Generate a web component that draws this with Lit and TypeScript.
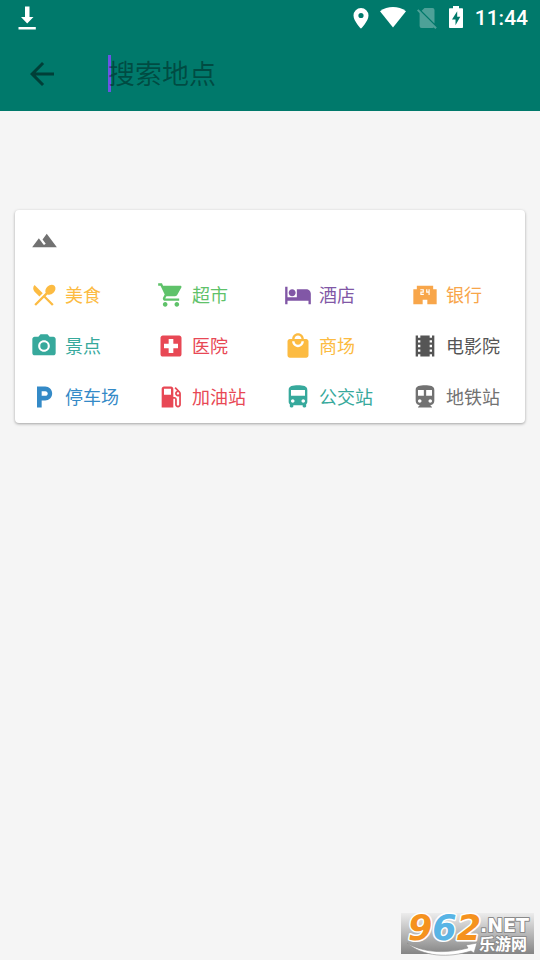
import { LitElement, html, css, svg } from "lit";
import { customElement, property } from "lit/decorators.js";

interface Place {
  label: string;
  tone: string;
  path: string;
}

const BACK = "M20 11H7.83l5.59-5.59L12 4l-8 8 8 8 1.41-1.41L7.83 13H20v-2z";
const TERRAIN = "M14 6l-3.75 5 2.85 3.8-1.6 1.2C9.81 13.75 7 10 7 10l-6 8h22L14 6z";

const PLACES: Place[] = [
  {
    label: "美食",
    tone: "amber",
    path: "M8.1 13.34l2.83-2.83L3.91 3.5c-1.56 1.56-1.56 4.09 0 5.66l4.19 4.18zm6.78-1.81c1.53.71 3.68.21 5.27-1.38 1.91-1.91 2.28-4.65.81-6.12-1.46-1.46-4.2-1.1-6.12.81-1.59 1.59-2.09 3.74-1.38 5.27L3.7 19.87l1.41 1.41L12 14.41l6.88 6.88 1.41-1.41L13.41 13l1.47-1.47z",
  },
  {
    label: "超市",
    tone: "green",
    path: "M7 18c-1.1 0-1.99.9-1.99 2S5.9 22 7 22s2-.9 2-2-.9-2-2-2zM1 2v2h2l3.6 7.59-1.35 2.45c-.16.28-.25.61-.25.96 0 1.1.9 2 2 2h12v-2H7.42c-.14 0-.25-.11-.25-.25l.03-.12.9-1.63h7.45c.75 0 1.41-.41 1.75-1.03l3.58-6.49c.08-.14.12-.31.12-.48 0-.55-.45-1-1-1H5.21l-.94-2H1zm16 16c-1.1 0-1.99.9-1.99 2s.89 2 1.99 2 2-.9 2-2-.9-2-2-2z",
  },
  {
    label: "酒店",
    tone: "purple",
    path: "M7 13c1.66 0 3-1.34 3-3S8.66 7 7 7s-3 1.34-3 3 1.34 3 3 3zm12-6h-8v7H3V5H1v15h2v-3h18v3h2v-9c0-2.21-1.79-4-4-4z",
  },
  {
    label: "银行",
    tone: "orange",
    path: "M19 7V4H5v3H2v13h8v-4h4v4h8V7h-3zm-8 3H9v1h2v1H8V9h2V8H8V7h3v3zm5 2h-1v-2h-2V7h1v2h1V7h1v5z",
  },
  {
    label: "景点",
    tone: "teal",
    path: "M12 8.8a3.2 3.2 0 1 0 0 6.4a3.2 3.2 0 1 0 0-6.4zM9 2L7.17 4H4c-1.1 0-2 .9-2 2v12c0 1.1.9 2 2 2h16c1.1 0 2-.9 2-2V6c0-1.1-.9-2-2-2h-3.17L15 2H9zm3 15c-2.76 0-5-2.24-5-5s2.24-5 5-5 5 2.24 5 5-2.24 5-5 5z",
  },
  {
    label: "医院",
    tone: "red",
    path: "M19 3H5c-1.1 0-1.99.9-1.99 2L3 19c0 1.1.9 2 2 2h14c1.1 0 2-.9 2-2V5c0-1.1-.9-2-2-2zm-1 11h-4v4h-4v-4H6v-4h4V6h4v4h4v4z",
  },
  {
    label: "商场",
    tone: "amber",
    path: "M19 6h-2c0-2.76-2.24-5-5-5S7 3.24 7 6H5c-1.1 0-1.99.9-1.99 2L3 20c0 1.1.9 2 2 2h14c1.1 0 2-.9 2-2V8c0-1.1-.9-2-2-2zm-7-3c1.66 0 3 1.34 3 3H9c0-1.66 1.34-3 3-3zm0 10c-2.76 0-5-2.24-5-5h2c0 1.66 1.34 3 3 3s3-1.34 3-3h2c0 2.76-2.24 5-5 5z",
  },
  {
    label: "电影院",
    tone: "dark",
    path: "M18 3v2h-2V3H8v2H6V3H4v18h2v-2h2v2h8v-2h2v2h2V3h-2zM8 17H6v-2h2v2zm0-4H6v-2h2v2zm0-4H6V7h2v2zm10 8h-2v-2h2v2zm0-4h-2v-2h2v2zm0-4h-2V7h2v2z",
  },
  {
    label: "停车场",
    tone: "blue",
    path: "M13 3H6v18h4v-6h3c3.31 0 6-2.69 6-6s-2.69-6-6-6zm.2 8H10V7h3.2c1.1 0 2 .9 2 2s-.9 2-2 2z",
  },
  {
    label: "加油站",
    tone: "red",
    path: "M19.77 7.23l.01-.01-3.72-3.72L15 4.56l2.11 2.11c-.94.36-1.61 1.26-1.61 2.33 0 1.38 1.12 2.5 2.5 2.5.36 0 .69-.08 1-.21v7.21c0 .55-.45 1-1 1s-1-.45-1-1V14c0-1.1-.9-2-2-2h-1V5c0-1.1-.9-2-2-2H6c-1.1 0-2 .9-2 2v16h10v-7.5h1.5v5c0 1.38 1.12 2.5 2.5 2.5s2.5-1.12 2.5-2.5V9c0-.69-.28-1.32-.73-1.77zM12 10H6V5h6v5zm6 0c-.55 0-1-.45-1-1s.45-1 1-1 1 .45 1 1-.45 1-1 1z",
  },
  {
    label: "公交站",
    tone: "teal",
    path: "M4 16c0 .88.39 1.67 1 2.22V20c0 .55.45 1 1 1h1c.55 0 1-.45 1-1v-1h8v1c0 .55.45 1 1 1h1c.55 0 1-.45 1-1v-1.78c.61-.55 1-1.34 1-2.22V6c0-3.5-3.58-4-8-4s-8 .5-8 4v10zm3.5 1c-.83 0-1.5-.67-1.5-1.5S6.67 14 7.5 14s1.5.67 1.5 1.5S8.33 17 7.5 17zm9 0c-.83 0-1.5-.67-1.5-1.5s.67-1.5 1.5-1.5 1.5.67 1.5 1.5-.67 1.5-1.5 1.5zm1.5-6H6V6h12v5z",
  },
  {
    label: "地铁站",
    tone: "grey",
    path: "M12 2c-4.42 0-8 .5-8 4v9.5C4 17.43 5.57 19 7.5 19L6 20.5v.5h12v-.5L16.5 19c1.93 0 3.5-1.57 3.5-3.5V6c0-3.5-3.58-4-8-4zM7.5 17c-.83 0-1.5-.67-1.5-1.5S6.67 14 7.5 14s1.5.67 1.5 1.5S8.33 17 7.5 17zm3.5-6H6V6h5v5zm5.5 6c-.83 0-1.5-.67-1.5-1.5s.67-1.5 1.5-1.5 1.5.67 1.5 1.5-.67 1.5-1.5 1.5zm1.5-6h-5V6h5v5z",
  },
];

const glyph = (path: string) =>
  svg`<svg class="glyph" viewBox="0 0 24 24" aria-hidden="true"><path d=${path}></path></svg>`;

@customElement("status-bar")
class StatusBar extends LitElement {
  @property() time = "";

  static styles = css`
    :host {
      display: flex;
      align-items: center;
      justify-content: space-between;
      height: 36px;
      padding: 0 12px 0 18px;
      color: #fff;
      font: 500 21px/36px Roboto, sans-serif;
    }
    svg {
      display: block;
      height: 24px;
      fill: currentColor;
    }
    .side {
      display: flex;
      align-items: center;
    }
    .system {
      gap: 11px;
    }
    .dim {
      opacity: 0.3;
    }
  `;

  render() {
    return html`
      <div class="side">
        <svg width="18" height="24" viewBox="0 0 18 24" aria-hidden="true">
          <path d="M7 .5h4.500v10.500h4L9.200 17.600L3 11h4zM.5 21h17.300v2.600H.5z" />
        </svg>
      </div>
      <div class="side system">
        <svg width="16" height="24" viewBox="0 0 16 24" aria-hidden="true">
          <path
            fill-rule="evenodd"
            d="M8 2a7.500 7.500 0 0 0-7.500 7.500C.5 15 8 22.700 8 22.700S15.500 15 15.500 9.500A7.500 7.500 0 0 0 8 2zm0 4.900a2.600 2.600 0 1 1 0 5.200a2.600 2.600 0 0 1 0-5.200z"
          />
        </svg>
        <svg width="26" height="24" viewBox="0 0 26 24" aria-hidden="true">
          <path d="M0 5.200C7.500-.3 18.500-.3 26 5.200L13 21.600z" />
        </svg>
        <svg class="dim" width="20" height="24" viewBox="0 0 20 24" aria-hidden="true">
          <path d="M7.500 2H15.500a2 2 0 0 1 2 2V17.600L4.700 4.800zM1.400 3.200L0 4.600L2.600 7.200V20a2 2 0 0 0 2 2H15.500a2 2 0 0 0 1.200-.5L18.400 23l1.400-1.400z" />
        </svg>
        <svg width="16" height="24" viewBox="0 0 16 24" aria-hidden="true">
          <path
            fill-rule="evenodd"
            d="M5 0h6v2.200h3.200a.8.8 0 0 1 .8.800V21.200a.8.8 0 0 1-.8.800H1.800a.8.8 0 0 1-.8-.8V3a.8.8 0 0 1 .8-.8H5zM9.200 5.200L4 13.400h3.500V19.200L12.300 10.800H9.200z"
          />
        </svg>
        <span>${this.time}</span>
      </div>
    `;
  }
}

@customElement("search-header")
class SearchHeader extends LitElement {
  static styles = css`
    :host {
      display: flex;
      align-items: center;
      gap: 48px;
      height: 75px;
      padding: 0 24px;
    }
    .back {
      flex: none;
      width: 36px;
      height: 36px;
      padding: 0;
      border: 0;
      background: none;
      color: #003f38;
    }
    .glyph {
      display: block;
      width: 36px;
      height: 36px;
      fill: currentColor;
    }
    .field {
      position: relative;
      flex: 1;
      min-width: 0;
      display: flex;
    }
    .field::before {
      content: "";
      position: absolute;
      inset: 0 auto 0 0;
      width: 3px;
      background: #6a54e4;
    }
    input {
      position: relative;
      box-sizing: border-box;
      flex: 1;
      min-width: 0;
      height: 37px;
      padding: 3px 0 0;
      border: 0;
      outline: 0;
      background: none;
      color: #003f38;
      font: 27px/34px Roboto, "Noto Sans CJK SC", sans-serif;
    }
    input::placeholder {
      color: rgba(0, 0, 0, 0.38);
      opacity: 1;
    }
  `;

  render() {
    return html`
      <button class="back" aria-label="返回">${glyph(BACK)}</button>
      <div class="field">
        <input type="text" aria-label="搜索地点" placeholder="搜索地点" />
      </div>
    `;
  }
}

@customElement("place-card")
class PlaceCard extends LitElement {
  @property({ attribute: false }) places: Place[] = [];

  static styles = css`
    :host {
      display: block;
      border-radius: 4px;
      background: #fff;
      box-shadow: 0 1px 3px rgba(0, 0, 0, 0.34);
    }
    .head {
      display: flex;
      align-items: center;
      height: 60px;
      padding: 0 16px;
      color: #727272;
    }
    .glyph {
      flex: none;
      width: 28px;
      height: 28px;
      fill: currentColor;
    }
    .head .glyph {
      width: 27px;
      height: 27px;
    }
    .grid {
      display: grid;
      grid-template-columns: repeat(4, 1fr);
      grid-auto-rows: 51px;
      padding-right: 2px;
    }
    .place {
      display: flex;
      align-items: center;
      gap: 7px;
      min-width: 0;
      padding: 0 0 0 15px;
      border: 0;
      background: none;
      font: 18px/24px Roboto, "Noto Sans CJK SC", sans-serif;
      white-space: nowrap;
    }
    .place .glyph {
      margin-bottom: 2px;
    }
    .amber { color: #fcbb42; }
    .green { color: #5fc26a; }
    .purple { color: #8157a6; }
    .orange { color: #f8a64a; }
    .teal { color: #37a99c; }
    .red { color: #e84855; }
    .dark { color: #555; }
    .blue { color: #348ac7; }
    .grey { color: #727272; }
  `;

  render() {
    return html`
      <div class="head">${glyph(TERRAIN)}</div>
      <div class="grid">
        ${this.places.map(
          (p) => html`<button class="place ${p.tone}">${glyph(p.path)}<span>${p.label}</span></button>`
        )}
      </div>
    `;
  }
}

@customElement("site-badge")
class SiteBadge extends LitElement {
  static styles = css`
    :host {
      display: block;
      background: linear-gradient(#ececec, #b4b4b4 55%, #858585);
    }
    svg {
      display: block;
      overflow: visible;
    }
    text {
      paint-order: stroke;
      stroke-linejoin: round;
    }
    .digits {
      font: italic bold 35px "DejaVu Sans", sans-serif;
      stroke: #fff;
      stroke-width: 3px;
    }
    .warm { fill: #f5921e; }
    .cool { fill: #58b4e5; }
    .net {
      font: bold 19px "DejaVu Sans", sans-serif;
    }
    .name {
      font: bold 16px "Noto Sans CJK SC", sans-serif;
    }
    .net,
    .name {
      fill: #fff;
      stroke: #8a8a8a;
      stroke-width: 2px;
    }
    .swoosh {
      fill: #fff;
      stroke: #8a8a8a;
      stroke-width: 0.6px;
    }
  `;

  render() {
    return html`
      <svg width="133" height="41" viewBox="0 0 133 41">
        <path class="swoosh" d="M6 30C24 41 48 40 67 35L65 32L76 30L73 40L70 38C48 45 22 44 6 30z" />
        <text class="digits" x="7" y="27"><tspan class="warm">9</tspan><tspan class="cool">6</tspan><tspan class="warm">2</tspan></text>
        <text class="net" x="79" y="19">.NET</text>
        <text class="name" x="78" y="37">乐游网</text>
      </svg>
    `;
  }
}

@customElement("app-root")
class AppRoot extends LitElement {
  static styles = css`
    :host {
      display: block;
      position: relative;
      min-height: 100vh;
      background: #f5f5f5;
    }
    .top {
      background: #00796b;
    }
    .content {
      padding: 99px 15px 0;
    }
    .badge {
      position: absolute;
      right: 6px;
      bottom: 6px;
    }
  `;

  render() {
    return html`
      <header class="top">
        <status-bar time="11:44"></status-bar>
        <search-header></search-header>
      </header>
      <main class="content">
        <place-card .places=${PLACES}></place-card>
      </main>
      <site-badge class="badge"></site-badge>
    `;
  }
}
